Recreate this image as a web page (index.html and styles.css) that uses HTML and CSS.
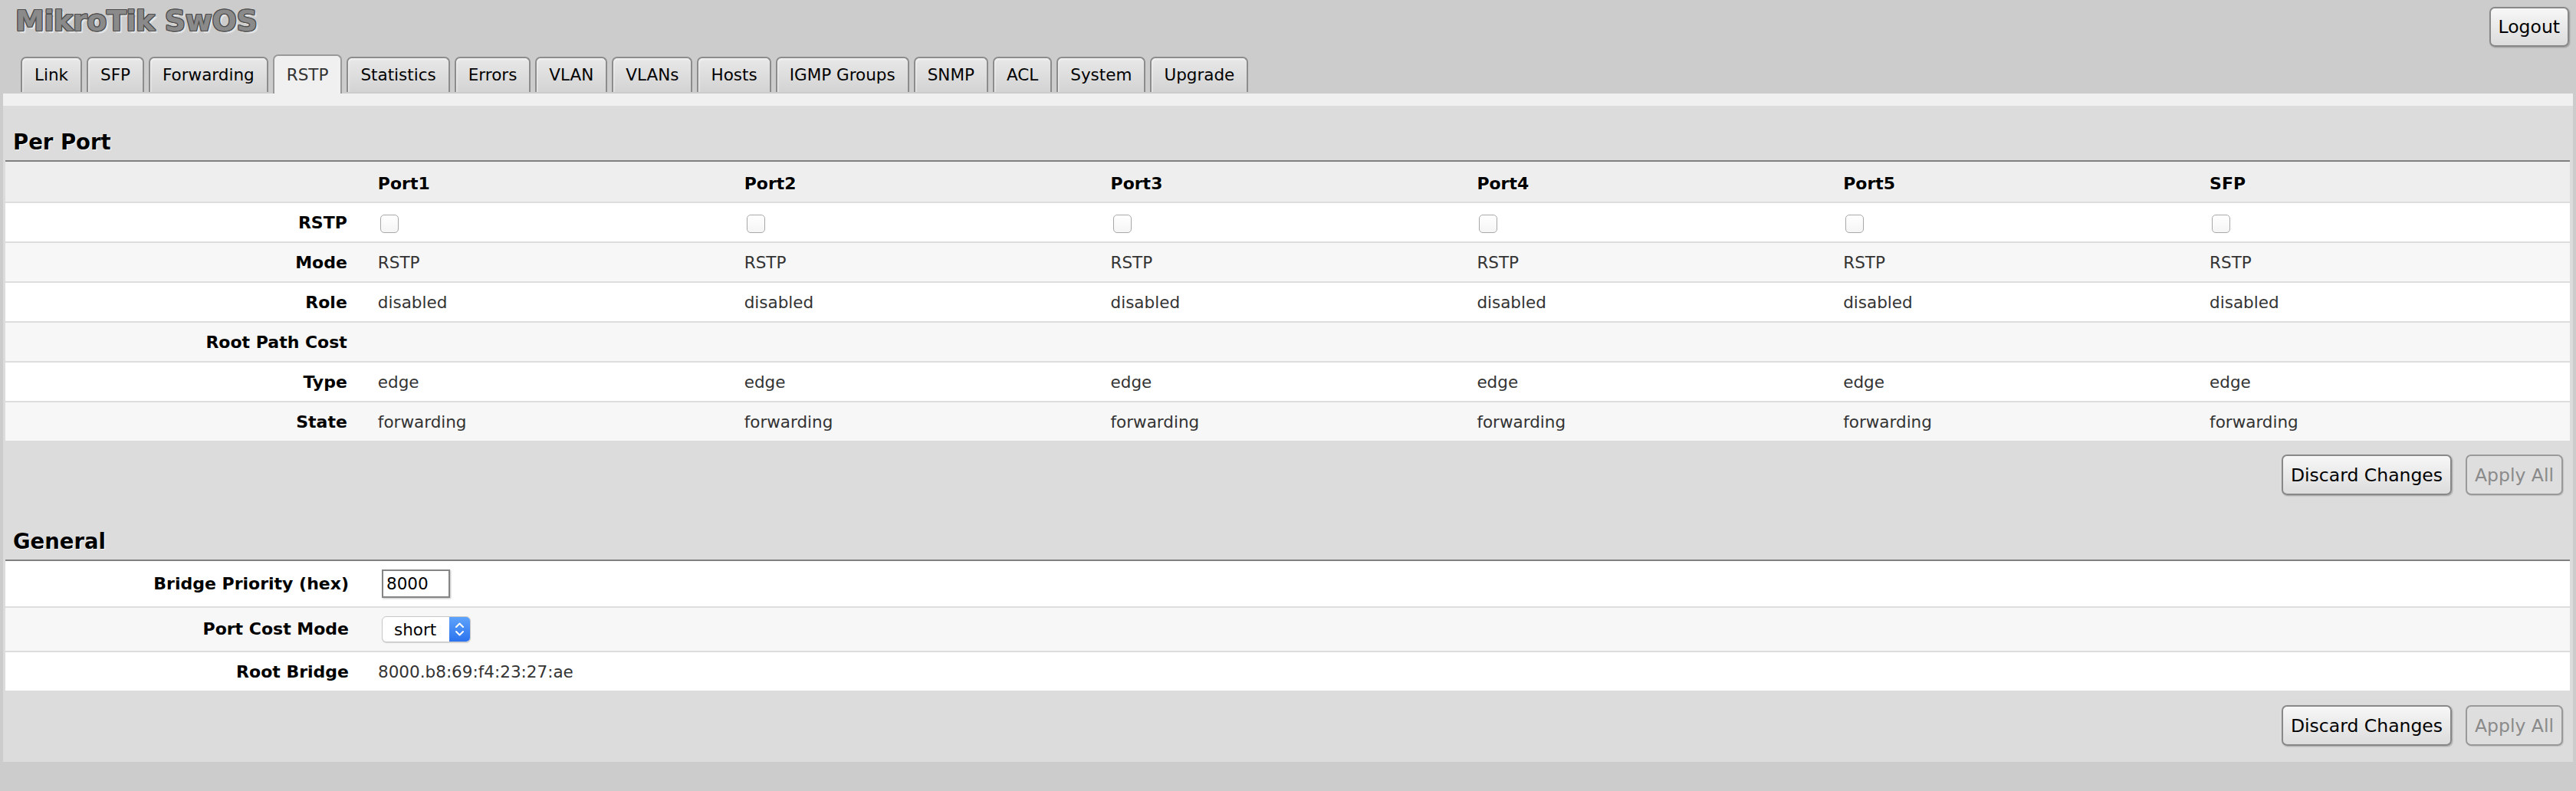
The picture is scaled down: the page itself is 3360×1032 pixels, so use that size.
FILE: index.html
```html
<!DOCTYPE html>
<html lang="en">
<head>
<meta charset="utf-8">
<title>MikroTik SwOS - RSTP</title>
<link rel="stylesheet" href="styles.css">
</head>
<body>
<header class="topbar">
  <h1 class="logo">MikroTik SwOS</h1>
  <button class="btn logout" type="button">Logout</button>
</header>
<nav class="tabs">
  <a class="tab">Link</a>
  <a class="tab">SFP</a>
  <a class="tab">Forwarding</a>
  <a class="tab active">RSTP</a>
  <a class="tab">Statistics</a>
  <a class="tab">Errors</a>
  <a class="tab">VLAN</a>
  <a class="tab">VLANs</a>
  <a class="tab">Hosts</a>
  <a class="tab">IGMP Groups</a>
  <a class="tab">SNMP</a>
  <a class="tab">ACL</a>
  <a class="tab">System</a>
  <a class="tab">Upgrade</a>
</nav>
<main class="panel">
  <div class="strip"></div>
  <section class="section">
    <h2 class="section-title">Per Port</h2>
    <table class="grid">
      <thead>
        <tr><th></th><th>Port1</th><th>Port2</th><th>Port3</th><th>Port4</th><th>Port5</th><th>SFP</th></tr>
      </thead>
      <tbody>
        <tr><th class="rowlabel">RSTP</th><td><input class="check" type="checkbox"></td><td><input class="check" type="checkbox"></td><td><input class="check" type="checkbox"></td><td><input class="check" type="checkbox"></td><td><input class="check" type="checkbox"></td><td><input class="check" type="checkbox"></td></tr>
        <tr><th class="rowlabel">Mode</th><td>RSTP</td><td>RSTP</td><td>RSTP</td><td>RSTP</td><td>RSTP</td><td>RSTP</td></tr>
        <tr><th class="rowlabel">Role</th><td>disabled</td><td>disabled</td><td>disabled</td><td>disabled</td><td>disabled</td><td>disabled</td></tr>
        <tr><th class="rowlabel">Root Path Cost</th><td></td><td></td><td></td><td></td><td></td><td></td></tr>
        <tr><th class="rowlabel">Type</th><td>edge</td><td>edge</td><td>edge</td><td>edge</td><td>edge</td><td>edge</td></tr>
        <tr><th class="rowlabel">State</th><td>forwarding</td><td>forwarding</td><td>forwarding</td><td>forwarding</td><td>forwarding</td><td>forwarding</td></tr>
      </tbody>
    </table>
    <div class="actions">
      <button class="btn" type="button">Discard Changes</button>
      <button class="btn" type="button" disabled>Apply All</button>
    </div>
  </section>
  <section class="section">
    <h2 class="section-title">General</h2>
    <table class="grid general">
      <colgroup><col class="labelcol"><col></colgroup>
      <tbody>
        <tr class="ctlrow"><th class="rowlabel">Bridge Priority (hex)</th><td><div class="ctl"><input class="text" type="text" value="8000"></div></td></tr>
        <tr class="ctlrow"><th class="rowlabel">Port Cost Mode</th><td><div class="ctl"><span class="select"><select><option>short</option><option>long</option></select><span class="select-arrow"><svg width="27" height="32" viewBox="0 0 27 32"><polyline points="9,13 13.5,8.5 18,13" fill="none" stroke="#fff" stroke-width="2" stroke-linecap="round" stroke-linejoin="round"/><polyline points="9,19 13.5,23.5 18,19" fill="none" stroke="#fff" stroke-width="2" stroke-linecap="round" stroke-linejoin="round"/></svg></span></span></div></td></tr>
        <tr><th class="rowlabel">Root Bridge</th><td>8000.b8:69:f4:23:27:ae</td></tr>
      </tbody>
    </table>
    <div class="actions last">
      <button class="btn" type="button">Discard Changes</button>
      <button class="btn" type="button" disabled>Apply All</button>
    </div>
  </section>
</main>
</body>
</html>
```
FILE: styles.css
```css
html, body {
  margin: 0;
  background: #cccccc;
}
body {
  font-family: "DejaVu Sans", Verdana, sans-serif;
  font-size: 21.5px;
  color: #000;
}

/* top bar */
.topbar {
  display: flex;
  justify-content: space-between;
  align-items: flex-start;
  height: 70px;
  padding: 0 9px 0 20px;
  box-sizing: border-box;
}
.logo {
  margin: 5px 0 0;
  font-size: 38px;
  line-height: 44px;
  font-weight: bold;
  letter-spacing: -0.4px;
  color: #8a8a8a;
  text-shadow:
    -1px 0 0 #4c4c4c,
    1px 0 0 #4c4c4c,
    0 -1px 0 #4c4c4c,
    0 1px 0 #4c4c4c,
    -1px -1px 0 #4c4c4c,
    1px 1px 0 #4c4c4c,
    1px -1px 0 #4c4c4c,
    -1px 1px 0 #4c4c4c,
    3px 3px 1px #e6e6e6;
}

/* buttons */
.btn {
  font-family: "DejaVu Sans", Verdana, sans-serif;
  font-size: 23.5px;
  line-height: 28px;
  color: #000;
  height: 53px;
  padding: 0 10px;
  box-sizing: border-box;
  border: 2px solid #888;
  border-radius: 7px;
  background: linear-gradient(#f7f7f7, #dcdcdc);
  box-shadow: 1px 1px 2px rgba(0, 0, 0, 0.28);
}
.btn:disabled {
  color: #8a8a8a;
  background: #dedede;
  border-color: #999;
  box-shadow: 1px 1px 1px rgba(0, 0, 0, 0.12);
}
.logout {
  margin-top: 9px;
  height: 52px;
}

/* tabs */
.tabs {
  display: flex;
  align-items: flex-end;
  gap: 6px;
  height: 52px;
  padding-left: 27px;
}
.tab {
  display: block;
  height: 46px;
  margin-bottom: 2px;
  box-sizing: border-box;
  padding: 0 16px;
  border: 2px solid #8c8c8c;
  border-bottom: none;
  border-radius: 7px 7px 0 0;
  background: linear-gradient(#e8e8e8, #d3d3d3);
  box-shadow: inset 1px 2px 2px #f2f2f2;
  font-size: 21.5px;
  line-height: 44px;
  color: #000;
  text-decoration: none;
  white-space: nowrap;
}
.tab.active {
  height: 51px;
  margin-bottom: 0;
  line-height: 49px;
  background: #f0f0f0;
  box-shadow: none;
  border-color: #999;
  color: #333;
}

/* panel */
.panel {
  margin: 0 4px;
  background: #dcdcdc;
}
.strip {
  height: 16px;
  background: #f0f0f0;
}
.section {
  padding: 0 4px 0 3px;
}
.section-title {
  margin: 0;
  padding: 31px 0 8px 10px;
  font-size: 27.5px;
  line-height: 32px;
  font-weight: bold;
  border-bottom: 2px solid #808080;
  text-shadow: 1px 1px 0 #fff;
}

/* tables */
.grid {
  width: 100%;
  border-collapse: separate;
  border-spacing: 0;
  table-layout: fixed;
}
.grid th,
.grid td {
  padding: 13px 8px 11px;
  line-height: 26px;
  border-bottom: 2px solid #dddddd;
  text-align: left;
  white-space: nowrap;
  vertical-align: middle;
}
.grid td {
  color: #333;
}
.grid th {
  font-size: 22px;
  font-weight: bold;
}
.grid thead th {
  background: #eeeeee;
  padding-top: 16px;
  padding-bottom: 10px;
  text-shadow: 1px 1px 0 #fff;
}
.grid tbody tr:nth-child(odd) > * {
  background: #ffffff;
}
.grid tbody tr:nth-child(even) > * {
  background: #f7f7f7;
}
.grid tbody tr:last-child > * {
  border-bottom: none;
}
.grid .rowlabel {
  text-align: right;
  padding-right: 32px;
  color: #000;
}
.general .labelcol {
  width: 478px;
}
.general .rowlabel {
  padding-right: 30px;
}
.grid .ctlrow > * {
  padding-top: 11px;
  padding-bottom: 11px;
}

/* controls */
.check {
  appearance: none;
  -webkit-appearance: none;
  width: 24px;
  height: 24px;
  margin: 0 0 0 3px;
  box-sizing: border-box;
  border: 1.5px solid #a8a8a8;
  border-radius: 5px;
  background: linear-gradient(#ffffff, #f4f4f4);
  vertical-align: middle;
}
.ctl {
  display: flex;
  align-items: center;
  min-height: 26px;
}
.text {
  width: 89px;
  height: 37px;
  margin-left: 5px;
  box-sizing: border-box;
  padding: 0 4px;
  border: 2px solid #858585;
  background: #fff;
  font-family: "DejaVu Sans", Verdana, sans-serif;
  font-size: 21.5px;
  color: #000;
  box-shadow: 1px 1px 2px rgba(0, 0, 0, 0.25);
  outline: none;
}
.select {
  display: inline-flex;
  margin-left: 5px;
  height: 34px;
  width: 116px;
  box-sizing: border-box;
  border: 1px solid #c8c8c8;
  border-radius: 6px;
  background: #fff;
  box-shadow: 0 1px 1px rgba(0, 0, 0, 0.15);
}
.select select {
  appearance: none;
  -webkit-appearance: none;
  flex: 1;
  min-width: 0;
  border: none;
  background: transparent;
  padding: 0 0 0 15px;
  font-family: "DejaVu Sans", Verdana, sans-serif;
  font-size: 21.5px;
  color: #000;
  outline: none;
}
.select-arrow {
  display: flex;
  align-items: center;
  justify-content: center;
  width: 27px;
  border-radius: 0 5px 5px 0;
  background: linear-gradient(#5ea3fb, #2b73ee);
}

/* actions */
.actions {
  display: flex;
  justify-content: flex-end;
  gap: 18px;
  padding: 18px 9px 13px 0;
}
.actions.last {
  padding-top: 19px;
  padding-bottom: 21px;
}
```
